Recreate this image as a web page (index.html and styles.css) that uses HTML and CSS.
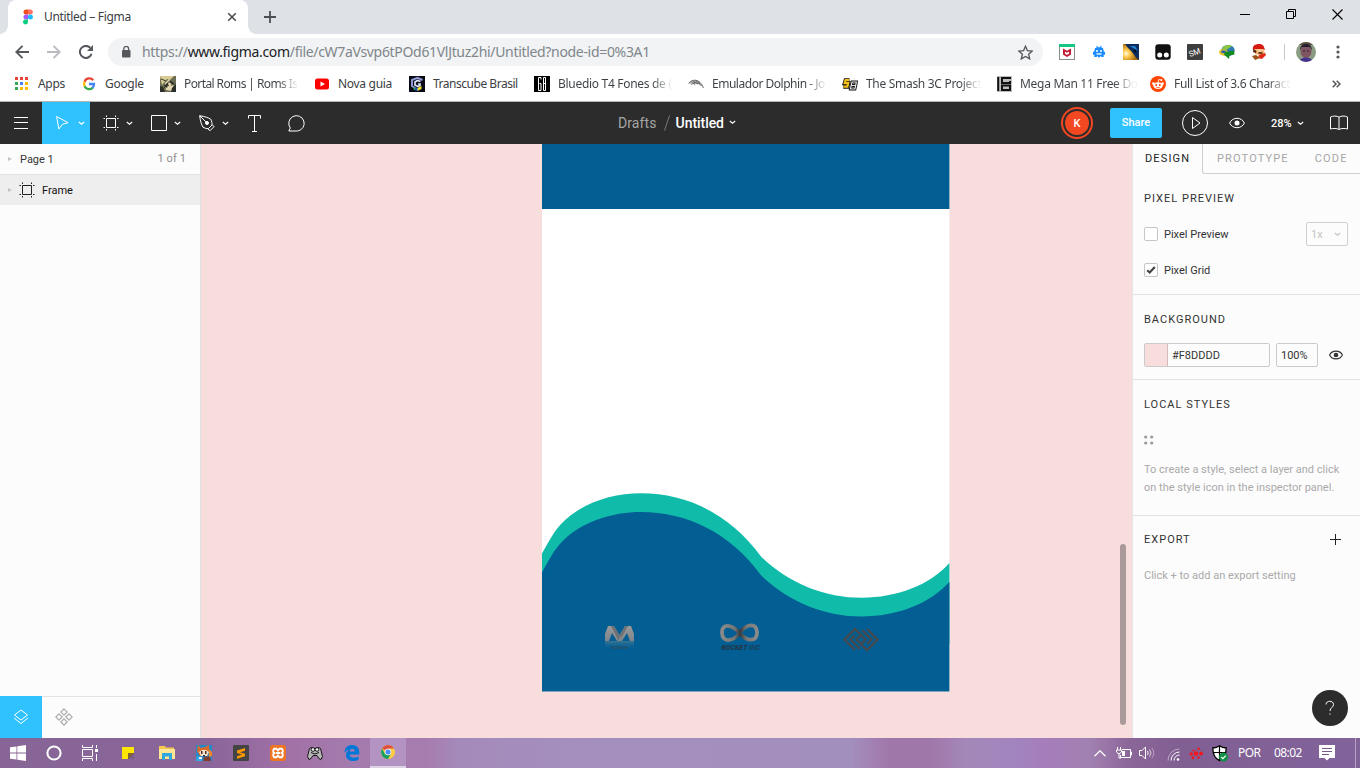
FILE: index.html
```html
<!DOCTYPE html>
<html lang="pt">
<head>
<meta charset="utf-8">
<title>Untitled – Figma</title>
<link rel="stylesheet" href="styles.css">
</head>
<body>
<header class="tabstrip">
  <div class="tab">
    <svg width="10" height="16" viewBox="0 0 10 16"><path d="M3 .5h2v5H3a2.5 2.5 0 0 1 0-5z" fill="#f24e1e"/><path d="M5 .5h2.3a2.5 2.5 0 0 1 0 5H5z" fill="#ff7262"/><path d="M3 5.500h2v5H3a2.500 2.500 0 0 1 0-5z" fill="#a259ff"/><circle cx="7.400" cy="8" r="2.500" fill="#1abcfe"/><path d="M3 10.500h2V13a2.500 2.500 0 1 1-2-2.500z" fill="#0acf83"/></svg>
    <span class="tab-title">Untitled – Figma</span>
    <svg class="tab-close" width="10" height="10" viewBox="0 0 10 10"><path d="M1.200 1.200l7.600 7.600M8.800 1.200L1.200 8.800" stroke="#4b4f54" stroke-width="1.600"/></svg>
  </div>
  <svg class="newtab" width="12" height="12" viewBox="0 0 12 12"><path d="M6 0v12M0 6h12" stroke="#4b4f54" stroke-width="1.800"/></svg>
  <div class="winctl">
    <svg width="10" height="10" viewBox="0 0 10 10"><path d="M0 5.500h10" stroke="#000"/></svg>
    <svg width="10" height="10" viewBox="0 0 10 10" fill="none" stroke="#000"><path d="M.5 2.500h7v7h-7zM2.500 2.500v-2h7v7h-2"/></svg>
    <svg width="11" height="11" viewBox="0 0 11 11"><path d="M.5.5l10 10M10.500.5l-10 10" stroke="#000" stroke-width="1.100"/></svg>
  </div>
</header>

<div class="navbar">
  <div class="navbtns">
    <svg width="14" height="14" viewBox="0 0 14 14" fill="none" stroke="#54575b" stroke-width="1.900"><path d="M14 7H1.500M7.500.8L1.300 7l6.200 6.200"/></svg>
    <svg width="14" height="14" viewBox="0 0 14 14" fill="none" stroke="#b9bbbe" stroke-width="1.900"><path d="M0 7h12.500M6.500.8L12.700 7l-6.200 6.200"/></svg>
    <svg width="14" height="14" viewBox="0 0 14 14" fill="none" stroke="#54575b" stroke-width="2"><path d="M12.600 8.800A6 6 0 1 1 11.300 2.800"/><path d="M14 0v6H8z" fill="#54575b" stroke="none"/></svg>
  </div>
  <div class="omnibox">
    <svg width="10" height="12" viewBox="0 0 10 12"><rect x="1" y="4" width="8.500" height="7.500" rx="1" fill="#54575b"/><path d="M2.800 5V2.800a2.400 2.400 0 0 1 4.800 0V5" fill="none" stroke="#54575b" stroke-width="1.300"/></svg>
    <span class="url">https://<b>www.figma.com</b>/file/cW7aVsvp6tPOd61VlJtuz2hi/Untitled?node-id=0%3A1</span>
    <svg class="star" width="15" height="15" viewBox="0 0 15 15"><path d="M7.500 1.200l1.900 4.400 4.800.4-3.600 3.200 1.100 4.700-4.200-2.500-4.200 2.500 1.100-4.700L.8 6l4.800-.4z" fill="none" stroke="#54575b" stroke-width="1.300"/></svg>
  </div>
  <div class="exts">
    <svg width="16" height="16" viewBox="0 0 16 16"><rect x=".5" y=".5" width="15" height="15" fill="#fff" stroke="#8d8d8d"/><rect width="16" height="3" fill="#16c784"/><path d="M4 4.500l4 2.300 4-2.300v6L8 13l-4-2.500zM5.900 7.600v2l2.100 1.300 2.100-1.300v-2L8 8.800z" fill="#c01833" fill-rule="evenodd"/></svg>
    <svg width="16" height="16" viewBox="0 0 16 16"><path d="M4 4l1.500-.3L5.700 1.500l1.600 1.700h1.400l1.600-1.700.2 2.200L12 4l.8 3.500L14 8v3l-1.300-.5V13h-2.200l-1-1-1 1.500h-1l-1-1.500-1 1H3.300v-2.500L2 11V8l1.200-.5z" fill="#1a8cff"/><circle cx="6" cy="7" r="1" fill="#fff"/><circle cx="10" cy="7" r="1" fill="#fff"/><path d="M5.500 9.300h5v1.300h-5z" fill="#fff"/></svg>
    <svg width="16" height="16" viewBox="0 0 16 16"><defs><radialGradient id="sun" cx=".2" cy=".6" r=".65"><stop offset="0" stop-color="#fffbe0"/><stop offset=".35" stop-color="#fcc94c"/><stop offset="1" stop-color="#a8690d"/></radialGradient></defs><rect width="16" height="16" fill="url(#sun)"/><path d="M2 0h14v16C12 14 11 9 6 5 4 3 3 1 2 0z" fill="#0b2c5c"/><path d="M7 2l8 5-3-5z" fill="#1c83d1"/><circle cx="12" cy="7" r="1.500" fill="#041021"/></svg>
    <svg width="16" height="16" viewBox="0 0 16 16"><rect x=".3" y=".3" width="15.400" height="15.400" rx="3" fill="#111"/><circle cx="4.700" cy="11" r="2.500" fill="#fff"/><circle cx="11.300" cy="11" r="2.500" fill="#fff"/></svg>
    <svg width="16" height="16" viewBox="0 0 16 16"><rect width="16" height="16" rx="1" fill="#3e3e3e"/><text x="1.500" y="11" transform="rotate(-20 8 8)" class="sm-mark">SM</text></svg>
    <svg width="16" height="16" viewBox="0 0 16 16"><ellipse cx="9" cy="6.500" rx="6.700" ry="5.500" fill="#2e78b4"/><path d="M3 4c3-4 8-3.500 10-2L9 5 5 7z" fill="#8cc63f"/><ellipse cx="4.500" cy="8.500" rx="4.500" ry="3" transform="rotate(15 4.500 8.500)" fill="#e8c52c"/><ellipse cx="4.500" cy="7.800" rx="2.500" ry="1.500" fill="#2d66aa"/><path d="M6 8l9-1.500.5 4-5 1L10 15l-5-4.500z" fill="#118b20"/></svg>
    <svg width="16" height="16" viewBox="0 0 16 16"><path d="M2 6C1 2 4 0 8 0c4 0 5 2 6 6l-3-1z" fill="#d91a10"/><path d="M3 5h9l2 4-4 3-6-2z" fill="#f4ba7b"/><path d="M2.500 5l3 2-.5 2-3-1zM8 8l4 .5-1 1.500-4-.5z" fill="#51220e"/><path d="M7 5l4 .5-1 2-4-.5z" fill="#fcd29d"/><path d="M8 11l6-2 1 2-4 4-4-1z" fill="#e02a16"/><path d="M1 12l4-1 4 3-5 2z" fill="#9c5217"/></svg>
    <i class="ext-sep"></i>
    <svg width="20" height="20" viewBox="0 0 20 20"><defs><clipPath id="av"><circle cx="10" cy="10" r="10"/></clipPath></defs><g clip-path="url(#av)"><rect width="20" height="20" fill="#8b9c84"/><path d="M0 0h20v3H0z" fill="#594d40"/><ellipse cx="10" cy="9.500" rx="5.500" ry="6.500" fill="#805562"/><path d="M4 8c0-8 12-8 12 0l-2-3H6z" fill="#241d2f"/><path d="M3 20c1-6 13-6 14 0z" fill="#46338f"/><circle cx="8" cy="9" r=".8" fill="#25172b"/><circle cx="12" cy="9" r=".8" fill="#25172b"/></g></svg>
    <svg class="kebab" width="4" height="14" viewBox="0 0 4 14" fill="#54575b"><circle cx="2" cy="2" r="1.600"/><circle cx="2" cy="7" r="1.600"/><circle cx="2" cy="12" r="1.600"/></svg>
  </div>
</div>

<nav class="bookmarks">
  <div class="bm"><svg width="16" height="16" viewBox="0 0 16 16"><path d="M1 1h3v3H1zM6 1h3v3H6zM11 1h3v3h-3z" fill="#ea4335"/><path d="M1 6h3v3H1z" fill="#34a853"/><path d="M6 6h3v3H6z" fill="#4285f4"/><path d="M11 6h3v3h-3zM6 11h3v3H6zM11 11h3v3h-3z" fill="#fbbc05"/><path d="M1 11h3v3H1z" fill="#34a853"/></svg><span>Apps</span></div>
  <div class="bm"><svg width="16" height="16" viewBox="0 0 16 16" fill="none" stroke-width="2.300"><path d="M12.200 4.200A5 5 0 0 0 3.600 5.800" stroke="#ea4335"/><path d="M3.700 5.600a5 5 0 0 0 0 4.800" stroke="#fbbc05"/><path d="M3.600 10.200a5 5 0 0 0 8.200 1.400" stroke="#34a853"/><path d="M8 8h5a5 5 0 0 1-1.400 3.700" stroke="#4285f4"/></svg><span>Google</span></div>
  <div class="bm tight"><svg width="16" height="16" viewBox="0 0 16 16"><rect width="16" height="16" fill="#6b6e52"/><path d="M0 0h14l-4 4-3-1-5 6z" fill="#d8cc94"/><path d="M5 7l4-4 5 5-2 7-6-1z" fill="#e2d4ac"/><path d="M4 10l5-5-2 7zM10 4l5 4-2 1-4-3zM0 10l3 1 2 5H0zM12 12l4-4v8h-5z" fill="#2c2f29"/><path d="M1 3l5 2M3 13l3-4M7 9l2 .5M11 9h1.500" stroke="#35362a"/></svg><span class="fade">Portal Roms | Roms Is</span></div>
  <div class="bm"><svg width="16" height="16" viewBox="0 0 16 16"><rect x="1" y="2.500" width="14" height="11" rx="2.500" fill="#f00"/><path d="M6.500 5.500v5L11 8z" fill="#fff"/></svg><span>Nova guia</span></div>
  <div class="bm snug"><svg width="16" height="16" viewBox="0 0 16 16"><rect width="16" height="16" fill="#080a15"/><path d="M13.500 4L8.500 1.800 3 4v6l4.500 3" fill="none" stroke="#8f97d4" stroke-width="2"/><path d="M11.500 5.500L8.500 4.500 6 6v3l3 1.500 2-1V8H9" fill="none" stroke="#dfe2fb" stroke-width="1.700"/><path d="M5 11.500l4 .5v3l-4-1z" fill="#1a47ce"/><path d="M8.500 12l4-2v3l-4 2z" fill="#f2e31d"/><path d="M4 11l3 2-2 1z" fill="#23b530"/></svg><span>Transcube Brasil</span></div>
  <div class="bm"><svg width="16" height="16" viewBox="0 0 16 16"><rect width="16" height="16" fill="#000"/><path d="M7 3.500v-2H4.500v13H7v-7H5.500M9.500 1.500h2v13h-2v-13M9.500 7.500h2" fill="none" stroke="#fff"/></svg><span class="fade">Bluedio T4 Fones de (</span></div>
  <div class="bm snug"><svg width="16" height="16" viewBox="0 0 16 16" fill="none"><path d="M.5 7.500C4 2.500 12 2.500 15.500 12c-3-4.500-6-5.500-9-5l1 3-3-2.500z" fill="#a4a6a4"/><path d="M.5 7.500C4 2.500 12 2.500 15.500 12M3 8.500C7 6 11 7 13.500 10M5 5.500l5 2.500M8 4.500l4 3" stroke="#565956" stroke-width=".8"/></svg><span class="fade">Emulador Dolphin - Jo</span></div>
  <div class="bm"><svg width="16" height="16" viewBox="0 0 16 16"><g fill="none"><path d="M7.500 4.200H3.600L2.700 7.200h3.500l-.8 3.500H1.200" stroke="#111" stroke-width="4"/><path d="M7.300 4.200H3.600L2.700 7.200h3.500l-.8 3.500H1.400" stroke="#f4c11b" stroke-width="2.200"/><path d="M10 6h4.300l-.6 3.500H9.200zM9.200 9.500h4.500l-.8 3.500H8.500z" stroke="#111" stroke-width="3"/><path d="M10 6h4.300l-.6 3.500H9.200zM9.200 9.500h4.500l-.8 3.500H8.500z" stroke="#e6e6e6" stroke-width="1.200"/></g></svg><span class="fade">The Smash 3C Project</span></div>
  <div class="bm"><svg width="16" height="16" viewBox="0 0 16 16"><rect x="1" width="15" height="16" fill="#bdbdbd"/><path d="M2.200 1v14M15 2H6v5h9M14 5v2h-3M15 9.500H6V14h8v-4.500" fill="none" stroke="#111" stroke-width="2"/></svg><span class="fade">Mega Man 11 Free Do</span></div>
  <div class="bm"><svg width="16" height="16" viewBox="0 0 16 16"><circle cx="8" cy="8" r="8" fill="#ff4500"/><ellipse cx="8" cy="9.600" rx="4.800" ry="3.400" fill="#fff"/><circle cx="3.400" cy="7.600" r="1.300" fill="#fff"/><circle cx="12.600" cy="7.600" r="1.300" fill="#fff"/><path d="M8 6.500l.7-3 2.300.6" fill="none" stroke="#fff" stroke-width=".8"/><circle cx="11.300" cy="4.100" r="1" fill="#fff"/><circle cx="6.200" cy="9" r="1" fill="#ff4500"/><circle cx="9.800" cy="9" r="1" fill="#ff4500"/><path d="M6 11c1 .9 3 .9 4 0" fill="none" stroke="#ff4500" stroke-width=".7"/></svg><span class="fade">Full List of 3.6 Charact</span></div>
  <svg class="more" width="9" height="8" viewBox="0 0 9 8" fill="none" stroke="#54575b" stroke-width="1.500"><path d="M.7.7L4 4 .7 7.300M4.700.7L8 4 4.700 7.300"/></svg>
</nav>

<div class="toolbar">
  <div class="tools">
    <div class="tool"><svg width="14" height="12" viewBox="0 0 14 12"><path d="M0 .5h14M0 5.500h14M0 11.500h14" stroke="#fff"/></svg></div>
    <div class="tool drop active"><svg width="16" height="18" viewBox="0 0 16 18" fill="none" stroke="#fff"><path d="M1.600 2.500l11.500 6.200-5.500 1.500-3.800 4.800z"/></svg><svg width="7" height="5" viewBox="0 0 7 5"><path class="chev" d="M.8 1l2.700 2.200L6.200 1"/></svg></div>
    <div class="tool drop"><svg width="16" height="18" viewBox="0 0 16 18" fill="none" stroke="#fff"><path d="M3.500 4.500h9v9h-9zM3.500 1.500v1.500M12.500 1.500v1.500M3.500 15v1.500M12.500 15v1.500M.5 4.500H2M.5 13.500H2M14 4.500h1.500M14 13.500h1.500"/></svg><svg width="7" height="5" viewBox="0 0 7 5"><path class="chev" d="M.8 1l2.700 2.200L6.200 1"/></svg></div>
    <div class="tool drop"><svg width="16" height="18" viewBox="0 0 16 18" fill="none" stroke="#fff"><path d="M.5 1.500h15v15H.5z"/></svg><svg width="7" height="5" viewBox="0 0 7 5"><path class="chev" d="M.8 1l2.700 2.200L6.200 1"/></svg></div>
    <div class="tool drop"><svg width="16" height="18" viewBox="0 0 16 18" fill="none" stroke="#fff"><path d="M.7 1.700c5 .8 8.800 2 11 3.500 1.200 2.400 1.500 4.200 1.300 5.800l-3.700 3.700c-2 0-3.700-.5-5.300-1.500C2.300 10.300 1.200 6.800.7 1.700zM.7 1.700l6.200 6.200M13.300 10.700l1.700 2-4 4-2-1.700"/><circle cx="8" cy="9" r="1.500" fill="#fff"/></svg><svg width="7" height="5" viewBox="0 0 7 5"><path class="chev" d="M.8 1l2.700 2.200L6.200 1"/></svg></div>
    <div class="tool type"><svg width="13" height="17" viewBox="0 0 13 17" fill="none" stroke="#fff"><path d="M.5 3.500v-3h12v3M6.500.5v16M4 16.500h5"/></svg></div>
    <div class="tool"><svg width="18" height="17" viewBox="0 0 18 17" fill="none" stroke="#fff"><path d="M.8 16l1.500-3A7.700 7.700 0 1 1 9.500 16z"/></svg></div>
  </div>
  <div class="crumb"><span class="drafts">Drafts</span><svg width="6" height="16" viewBox="0 0 6 16"><path d="M5.500.5l-5 15" stroke="#777"/></svg><span class="fname">Untitled</span><svg width="7" height="5" viewBox="0 0 7 5"><path class="chev" d="M.8 1l2.700 2.200L6.200 1"/></svg></div>
  <div class="actions">
    <div class="avatar"><span>K</span></div>
    <div class="share">Share</div>
    <svg class="play" width="26" height="26" viewBox="0 0 26 26" fill="none" stroke="#fff"><circle cx="13" cy="13" r="12.500"/><path d="M10.500 7.500v11l7.500-5.500z"/></svg>
    <svg class="eye" width="16" height="12" viewBox="0 0 16 12" fill="none" stroke="#fff"><path d="M.6 6C3.500-.3 12.500-.3 15.400 6 12.500 12.300 3.500 12.300.6 6z"/><circle cx="8" cy="6" r="2.500" fill="#fff" stroke="none"/></svg>
    <span class="zoom">28%</span>
    <svg width="7" height="5" viewBox="0 0 7 5"><path class="chev" d="M.8 1l2.700 2.200L6.200 1"/></svg>
    <svg class="book" width="18" height="16" viewBox="0 0 18 16" fill="none" stroke="#fff"><path d="M9 14.500c-2-1.300-6-1.300-8.500-.5V2C3 .7 7 .7 9 2.200 11 .7 15 .7 17.500 2v12c-2.500-.8-6.500-.8-8.500.5zM9 2v12.500"/></svg>
  </div>
</div>

<main class="work">
  <aside class="layers">
    <div class="pagerow"><i class="tri"></i><span>Page 1</span><em>1 of 1</em></div>
    <div class="layer"><i class="tri"></i><svg width="16" height="16" viewBox="0 0 16 16" fill="none" stroke="#222"><path d="M3.500 3.500h9v9h-9zM3.500.5V2M12.500.5V2M3.500 14v1.500M12.500 14v1.500M.5 3.500H2M.5 12.500H2M14 3.500h1.500M14 12.500h1.500"/></svg><span>Frame</span></div>
    <div class="ltabs">
      <div class="ltab on"><svg width="16" height="16" viewBox="0 0 16 16" fill="none" stroke="#fff"><path d="M8 1l6.500 5L8 11 1.500 6zM1 9l7 5.500L15 9"/></svg></div>
      <div class="ltab"><svg width="18" height="18" viewBox="0 0 18 18" fill="none" stroke="#aaa" stroke-width="1.100"><path d="M9 .8L12.200 4 9 7.200 5.800 4zM9 10.800l3.200 3.200L9 17.200 5.800 14zM4 5.800L7.200 9 4 12.200.8 9zM14 5.800L17.200 9 14 12.200 10.800 9z"/></svg></div>
    </div>
  </aside>

  <section class="canvas">
    <svg class="frame" width="408" height="548" viewBox="0 0 408 548">
      <defs>
        <linearGradient id="metal" x1="0" y1="0" x2="0" y2="1"><stop offset="0" stop-color="#9a9a9a"/><stop offset="1" stop-color="#7d858a"/></linearGradient>
        <linearGradient id="loop" x1="0" x2="1"><stop offset="0" stop-color="#8a8a8a"/><stop offset=".35" stop-color="#777"/><stop offset=".52" stop-color="#363b40"/><stop offset=".7" stop-color="#777"/><stop offset="1" stop-color="#8a8a8a"/></linearGradient>
        <linearGradient id="refl" x1="0" y1="0" x2="0" y2="1"><stop offset="0" stop-color="#6a8795" stop-opacity=".55"/><stop offset="1" stop-color="#035e93" stop-opacity="0"/></linearGradient>
      </defs>
      <rect width="407.400" height="547.500" fill="#fff"/>
      <rect width="407.400" height="65" fill="#035e93"/>
      <path d="M0 409.500C7 397 12 387.500 19 380C39 359 70 349.300 99 349.300C145 349.300 188 370 219 412.500C248 440 283 453.700 319.500 453.700C355 453.700 388 441 407.400 419V500H0z" fill="#10bca9"/>
      <path d="M0 428.200C7 415.700 12 406.200 19 398.700C39 377.700 70 368 99 368C145 368 188 388.700 219 431.200C248 458.700 283 472.400 319.500 472.400C355 472.400 388 459.700 407.400 437.700V547.500H0z" fill="#035e93"/>
      <path d="M63 497v-7l3-8h6l5.500 9 5.500-9h6l3 8v7h-4l-3-8-5 8h-5l-5-8-3 8z" fill="url(#metal)"/>
      <path d="M69 482h3l6 10-1.500 4zM86 482h-3l-5 9 1 3z" fill="#555b60" opacity=".6"/>
      <rect x="63" y="497" width="29" height="9" fill="url(#refl)"/>
      <text x="69" y="505" class="logo-a">MONOGR</text>
      <path d="M197.500 489C190 480 180 479 180 488.500C180 499 191 498 197.500 489C204 480 215 478 215 488.500C215 498 205 498 197.500 489z" fill="none" stroke="url(#loop)" stroke-width="3.800"/>
      <text x="179.500" y="506" class="logo-b"><tspan font-weight="bold">ROCKET</tspan> INC</text>
      <g fill="none" stroke="#45494d" stroke-width="2.300"><path d="M313 506L302.500 495.500 313 485l10.500 10.500L319 500M313 491l-4.500 4.500 9.500 9.500"/><path d="M325 485l10.500 10.500L325 506l-10.500-10.500L319 491M325 500l4.500-4.500-9.500-9.500"/></g>
    </svg>
    <i class="scroll"></i>
  </section>

  <aside class="props">
    <div class="ptabs"><div class="ptab on">DESIGN</div><div class="prest"><span>PROTOTYPE</span><span>CODE</span></div></div>
    <div class="sec">
      <h2>PIXEL PREVIEW</h2>
      <div class="row"><i class="check"></i><span>Pixel Preview</span><div class="select"><span>1x</span><svg width="7" height="5" viewBox="0 0 7 5"><path class="chev grey" d="M.8 1l2.700 2.200L6.200 1"/></svg></div></div>
      <div class="row"><i class="check"><svg width="12" height="12" viewBox="0 0 12 12"><path d="M2.200 6.200l2.500 2.300L9.800 3" fill="none" stroke="#444" stroke-width="2.200"/></svg></i><span>Pixel Grid</span></div>
    </div>
    <div class="sec">
      <h2>BACKGROUND</h2>
      <div class="row"><div class="color"><i></i><span>#F8DDDD</span></div><div class="opac">100%</div><svg width="14" height="10" viewBox="0 0 14 10" fill="none" stroke="#333" stroke-width="1.100"><path d="M.6 5C3-.2 11-.2 13.400 5 11 10.200 3 10.200.6 5z"/><circle cx="7" cy="5" r="2.300" fill="#333" stroke="none"/></svg></div>
    </div>
    <div class="sec local">
      <h2>LOCAL STYLES</h2>
      <div class="row"><svg width="10" height="10" viewBox="0 0 10 10" fill="#999"><circle cx="1.700" cy="2" r="1.600"/><circle cx="7.700" cy="2" r="1.600"/><circle cx="1.700" cy="8" r="1.600"/><circle cx="7.700" cy="8" r="1.600"/></svg></div>
      <p>To create a style, select a layer and click<br>on the style icon in the inspector panel.</p>
    </div>
    <div class="sec export">
      <div class="row"><h2>EXPORT</h2><svg width="11" height="11" viewBox="0 0 11 11"><path d="M5.500 0v11M0 5.500h11" stroke="#222"/></svg></div>
      <div class="row hint">Click + to add an export setting</div>
    </div>
    <div class="help"><svg width="10" height="16" viewBox="0 0 10 16" fill="none" stroke="#fff"><path d="M1 4.500C1 .2 8.500.2 8.500 4.500c0 3-3.500 3-3.500 6.500M5 13.500v1.200"/></svg></div>
  </aside>
</main>

<footer class="taskbar">
  <div class="apps">
    <div><svg width="16" height="16" viewBox="0 0 16 16" fill="#fff"><path d="M0 2.300l6.500-.9v6.100H0zM7.300 1.200L16 0v7.500H7.300zM0 8.400h6.500v6.200L0 13.700zM7.300 8.400H16V16l-8.700-1.200z"/></svg></div>
    <div><svg width="16" height="16" viewBox="0 0 16 16"><circle cx="8" cy="8" r="6.600" fill="none" stroke="#fff" stroke-width="2"/></svg></div>
    <div><svg width="16" height="16" viewBox="0 0 16 16" fill="none" stroke="#fff"><path d="M.5 0v2.500h10V0M.5 16v-2.500h10V16M.5 4.500h10v7H.5zM14.500 0v3M14.500 9v7"/><path d="M13 4h3v3h-3z" fill="#fff" stroke="none"/></svg></div>
    <div><svg width="16" height="16" viewBox="0 0 16 16"><path d="M2 2h12v6l-6 6H2z" fill="#ffe600"/><path d="M8 8h6v6H8z" fill="#7c5d85"/><path d="M8 8h6l-6 6z" fill="#7f652f"/></svg></div>
    <div><svg width="16" height="16" viewBox="0 0 16 16"><path d="M0 1h6l1 1.500h8V14H0z" fill="#f3c74f"/><path d="M0 4h16v10H0z" fill="#ffe694"/><path d="M3 15V8h10v7h-3v-3.500H6V15z" fill="#30a7df"/></svg></div>
    <div><svg width="16" height="16" viewBox="0 0 16 16"><rect width="16" height="16" fill="#278ac8"/><path d="M2 0l3 3 4-1 4-2v6l-2 5H4L1 6z" fill="#d86a2a"/><path d="M3 7l3-2h4l3 2-2 4H5z" fill="#fbe3c5"/><path d="M5 6h1.500v3H5zM9 6h1.500v3H9zM7 10h2v1.500H7z" fill="#402c36"/><path d="M1 11l5 1v4H0z" fill="#35a9e5"/><path d="M3 12h3v2H3z" fill="#eee"/><path d="M8 12l6-1 1 5H7z" fill="#813d2f"/><path d="M13 4l3 3v4l-3 1z" fill="#f18626"/></svg></div>
    <div><svg width="16" height="16" viewBox="0 0 16 16"><rect width="16" height="16" rx="1" fill="#444"/><path d="M12 3v2.700L7 7.200l5 1.500v2.600l-8 2.500v-2.600l5-1.600L4 8V5.500z" fill="#ff9800"/></svg></div>
    <div><svg width="16" height="16" viewBox="0 0 16 16"><rect width="16" height="16" rx="2.500" fill="#ee7623"/><path d="M8 5.500L6.500 3.700H4.200L3.300 5v2l1.200 1-1.200 1v2l.9 1.300h2.300L8 10.500l1.500 1.800h2.300l.9-1.300V9l-1.200-1 1.200-1V5l-.9-1.300H9.500zM6 8h4" fill="none" stroke="#fff" stroke-width="1.900"/></svg></div>
    <div><svg width="16" height="16" viewBox="0 0 16 16"><path d="M4 2.500l2 1h4l2-1 1.500 1 2 8-1.500 3-2-1-2-3H6l-2 3-2 1-1.500-3 2-8z" fill="#b7b7b7" stroke="#171717"/><circle cx="6" cy="4.500" r="1.800" fill="#fff" stroke="#111"/><circle cx="10" cy="4.500" r="1.800" fill="#fff" stroke="#111"/><path d="M4 7.500q4 3 8 0" stroke="#111" fill="none"/></svg></div>
    <div><svg width="16" height="16" viewBox="0 0 16 16"><path d="M.5 8C.5 2.500 4 0 8.200 0 13 0 15.300 3.500 15.300 7.500v2H5.500c.2 2 2 3.200 4.500 3.200 1.700 0 3.200-.5 4.500-1.200v3c-1.500 1-3.300 1.500-5.500 1.500-4.300 0-7-2.500-7-6 0-2.300 1.300-4 3.300-5C3 5.300 1.500 6.300.5 8zM5.700 6.500h5c0-1.800-.8-2.800-2.400-2.800-1.500 0-2.400 1.200-2.600 2.800z" fill="#0078d7" fill-rule="evenodd"/></svg></div>
    <div class="running"><svg width="14" height="14" viewBox="0 0 14 14"><circle cx="7" cy="7" r="7" fill="#ffcd40"/><path d="M7 7L1 3.500A7 7 0 0 1 13 3.500H7z" fill="#de5145"/><path d="M1 3.500A7 7 0 0 0 7 14l3-5.300L7 10 4 8.700z" fill="#1aa15f"/><circle cx="7" cy="7" r="3.300" fill="#f4f4f4"/><circle cx="7" cy="7" r="2.500" fill="#4c8bf5"/></svg></div>
  </div>
  <div class="tray">
    <svg width="12" height="7" viewBox="0 0 12 7"><path d="M.5 6.200L6 .8l5.500 5.400" fill="none" stroke="#fff" stroke-width="1.200"/></svg>
    <svg width="16" height="12" viewBox="0 0 16 12"><path d="M6 2.500h8.500v8H4.500V8M14.500 5h1v3h-1" fill="none" stroke="#fff"/><path d="M6 4h3v5H6z" fill="#fff"/><path d="M1.500 0v3M4.500 0v3M.5 3h5v2L3 7 .5 5zM3 6v5h2" fill="none" stroke="#fff"/></svg>
    <svg width="16" height="14" viewBox="0 0 16 14" fill="none" stroke="#fff"><path d="M.5 4.500h2.500L6.500 1v12L3 9.500H.5zM8.500 5q1.300 2 0 4"/><path d="M10.500 3.500q3 3.500 0 7" opacity=".7"/><path d="M12.800 2q4 5 0 10" opacity=".4"/></svg>
    <svg width="13" height="13" viewBox="0 0 13 13" fill="none" stroke="#fff"><path d="M1 12.500A11.500 11.500 0 0 1 12.500 1" opacity=".45"/><path d="M4 12.500A8.500 8.500 0 0 1 12.500 4"/><path d="M7 12.500A5.500 5.500 0 0 1 12.500 7"/><circle cx="11" cy="11.500" r="1.300" fill="#fff" stroke="none"/></svg>
    <svg width="14" height="13" viewBox="0 0 14 13" fill="#f2181d"><circle cx="7" cy="6.500" r="2.300"/><circle cx="2.200" cy="7" r="1.700"/><circle cx="12" cy="6.500" r="1.900"/><circle cx="9.500" cy="1.800" r="1.300"/><circle cx="4.500" cy="3.500" r="1"/><circle cx="4" cy="10.700" r="1.500"/><circle cx="9.500" cy="10.500" r="1.300"/></svg>
    <svg width="16" height="17" viewBox="0 0 16 17"><path d="M7.500.8C5.500 2.300 3 3 .8 3c0 6 1.200 10 6.700 12.700C13 13 14.200 9 14.200 3c-2.200 0-4.700-.7-6.700-2.200z" fill="#fff" stroke="#000" stroke-width="1.300"/><path d="M7.500 1v14.500M1 7.500h13" stroke="#000" stroke-width="1.200"/><circle cx="11.500" cy="12" r="4.500" fill="#109044"/><path d="M9.300 12l1.600 1.600 2.900-3" fill="none" stroke="#fff" stroke-width="1.200"/></svg>
    <span class="por">POR</span><span class="clock">08:02</span>
    <svg width="16" height="16" viewBox="0 0 16 16"><path d="M0 0h16v13h-5.500L8 15.500 5.500 13H0z" fill="#fff"/><path d="M3 3.500h10M3 6.500h10M3 9.500h7" stroke="#755a86"/></svg>
    <i></i>
  </div>
</footer>
</body>
</html>
```
FILE: styles.css
```css
* { box-sizing: border-box; }
body { margin: 0; width: 1360px; height: 768px; overflow: hidden; font-family: Roboto, sans-serif; font-size: 11px; color: #333; background: #fff; }
svg { display: block; flex: none; }
i, em { font-style: normal; }

/* Browser chrome */
.tabstrip { height: 34px; background: #dee1e6; display: flex; align-items: center; padding-left: 8px; }
.tab { position: relative; width: 240px; height: 34px; background: #fff; border-radius: 8px 8px 0 0; display: flex; align-items: center; padding: 0 11px 0 15px; }
.tab::before, .tab::after { content: ""; position: absolute; bottom: 0; width: 8px; height: 8px; }
.tab::before { left: -8px; background: radial-gradient(circle at 0 0, #dee1e6 7.500px, #fff 8px); }
.tab::after { right: -8px; background: radial-gradient(circle at 100% 0, #dee1e6 7.500px, #fff 8px); }
.tab-title { margin-left: 11px; padding-bottom: 1px; font: 12px "Noto Sans", sans-serif; letter-spacing: -.33px; color: #3c4043; white-space: nowrap; }
.tab-close { margin-left: auto; }
.newtab { margin-left: 16px; }
.winctl { margin-left: auto; display: flex; align-items: center; gap: 36px; padding: 0 17px 6px 0; }
.navbar { height: 36px; display: flex; align-items: center; padding-left: 15px; }
.navbtns { display: flex; gap: 18px; width: 93px; }
.omnibox { width: 935px; height: 28px; border-radius: 14px; background: #f1f3f4; display: flex; align-items: center; padding: 0 10px 0 13px; }
.url { margin-left: 11px; padding-bottom: 2px; font: 14px "Noto Sans", sans-serif; letter-spacing: -.32px; color: #80868b; white-space: nowrap; }
.url b { font-weight: 400; color: #202124; }
.star { margin-left: auto; }
.exts { display: flex; align-items: center; gap: 16px; margin-left: 16px; }
.ext-sep { width: 1px; height: 16px; background: #c6c8cb; margin-right: -5px; margin-left: 1px; }
.kebab { margin-left: 4px; }
.sm-mark { font: 8px Roboto, sans-serif; fill: #fff; }
.bookmarks { height: 31px; display: grid; grid-template-columns: 67px 79px 154px 95px 125px 154px 154px 154px 154px 182px auto; align-items: center; padding: 0 0 3px 14px; }
.bm { display: flex; gap: 8px; align-items: center; font: 12px "Noto Sans", sans-serif; letter-spacing: -.3px; color: #3c4043; white-space: nowrap; }
.bm span { padding-bottom: 1px; }
.tight { letter-spacing: -.6px; }
.snug { letter-spacing: -.48px; }
.fade { color: transparent; background: linear-gradient(90deg, #3c4043 94px, rgba(60, 64, 67, .08) 113px); -webkit-background-clip: text; background-clip: text; }

/* Editor toolbar */
.toolbar { height: 43px; border-top: 1px solid #b4b4b4; background: #2c2c2c; display: grid; grid-template-columns: 617px 444px 299px; align-items: center; color: #fff; }
.tools, .tool, .crumb, .actions { display: flex; align-items: center; }
.tool { width: 42px; height: 42px; justify-content: center; }
.drop { width: 48px; justify-content: flex-start; padding-left: 13px; gap: 7px; }
.type { padding-right: 1px; }
.active { background: #30c2ff; }
.chev { fill: none; stroke: #fff; stroke-width: 1.100; }
.chev.grey { stroke: #c4c4c4; }
.crumb { font-size: 14px; gap: 7px; padding: 0 0 1px 1px; }
.drafts { color: #a5a5a5; letter-spacing: .1px; }
.fname { font-weight: 500; margin: 0 -2px 0 -1px; letter-spacing: -.05px; }
.avatar { width: 32px; height: 32px; border: 2px solid #f24822; border-radius: 50%; padding: 2px; }
.avatar span { display: grid; place-items: center; height: 24px; border-radius: 50%; background: #f24822; font-weight: 500; }
.share { width: 52px; height: 30px; margin-left: 17px; border-radius: 2px; background: #30c2ff; display: grid; place-items: center; font-weight: 500; padding-bottom: 2px; }
.play { margin-left: 20px; }
.eye { margin: 0 26px 0 21px; }
.zoom { font-weight: 500; margin-right: 5px; width: 21px; }
.book { margin-left: 26px; }

/* Workspace */
.work { height: 594px; display: flex; }
.layers { width: 201px; background: #fcfcfc; border-right: 1px solid #dfe0e3; display: flex; flex-direction: column; }
.tri { border: 2.500px solid transparent; border-left: 4px solid #c3c3c3; border-right: 0; margin-left: 8px; }
.pagerow, .layer { height: 31px; display: flex; align-items: center; }
.pagerow { border-bottom: 1px solid #e3e3e3; }
.pagerow span { margin-left: 8px; }
.pagerow em { margin: 0 14px 2px auto; color: #8c8c8c; letter-spacing: .1px; }
.layer { background: #eee; color: #111; height: 30px; }
.layer svg { margin: 0 7px; }
.ltabs { margin-top: auto; height: 42px; display: flex; box-shadow: inset 0 1px #e3e3e3; }
.ltab { width: 43px; height: 42px; display: grid; place-items: center; }
.ltab.on { width: 42px; background: #30c2ff; }
.canvas { position: relative; width: 931px; background: #f8dddd; overflow: hidden; }
.frame { margin-left: 341px; }
.logo-a { font: bold 4px Roboto, sans-serif; fill: #284e66; }
.logo-b { font: italic 7px Roboto, sans-serif; fill: #25333f; }
.scroll { position: absolute; right: 6px; top: 400px; width: 6px; height: 181px; border-radius: 3px; background: #aa9999; }
.props { position: relative; width: 228px; background: #fcfcfc; border-left: 1px solid #e5e5e5; }
.ptabs { height: 30px; display: flex; letter-spacing: 1.150px; }
.ptab { width: 69px; padding: 8px 0 0 12px; color: #222; }
.prest { flex: 1; border: solid #d0d0d0; border-width: 0 0 1px 1px; border-radius: 0 0 0 3px; display: flex; gap: 26px; padding: 8px 0 0 14px; color: #a6a6a6; }
.sec { padding: 6px 12px 6px 11px; border-bottom: 1px solid #e3e3e3; }
.sec h2 { margin: 0; height: 36px; line-height: 38px; font-size: 11px; font-weight: 400; letter-spacing: 1.020px; color: #333; }
.row { height: 36px; display: flex; align-items: center; }
.check { width: 14px; height: 14px; border: 1px solid #c6c6c6; border-radius: 2px; background: #fff; margin-right: 6px; }
.select { margin-left: auto; width: 42px; height: 24px; border: 1px solid #d0d0d0; border-radius: 2px; display: flex; align-items: center; justify-content: space-between; padding: 0 6px 0 4px; color: #c4c4c4; }
.color { width: 126px; height: 24px; border: 1px solid #cbcbcb; border-radius: 2px; display: flex; align-items: center; margin-right: 6px; }
.color i { width: 23px; height: 22px; background: #f8dddd; border-right: 1px solid #d4bcbc; margin-right: 4px; }
.opac { width: 42px; height: 24px; line-height: 24px; padding-left: 4px; border: 1px solid #cbcbcb; border-radius: 2px; margin-right: 11px; }
.local p { margin: 3px 0 0; height: 48px; line-height: 18px; color: #aaa; white-space: nowrap; }
.export { padding-top: 5px; border: 0; }
.export .row { justify-content: space-between; padding-right: 7px; }
.hint { color: #aaa; }
.help { position: absolute; right: 12px; bottom: 12px; width: 36px; height: 36px; border-radius: 50%; background: #2c2c2c; display: grid; place-items: center; }

/* Taskbar */
.taskbar { height: 30px; display: flex; justify-content: space-between; background: linear-gradient(90deg, #876596 0, #89669a 210px, #a271a6 290px, #a47bae 350px, #a77cae 425px, #a48aba 460px, #a48fbe 570px, #a38fbe 850px, #a077a9 890px, #a077a9 930px, #a388b8 965px, #a284bf 1015px, #a57dba 1045px, #a181b1 1090px, #8b6698 1130px, #815f93 1180px, #81639a 1360px); color: #fff; }
.apps { display: flex; }
.apps div { width: 37px; height: 30px; display: grid; place-items: center; }
.apps div:nth-child(-n+3), .apps .running { width: 36px; }
.apps div:nth-child(4) { width: 40px; }
.apps .running { background: #b393c2; border-bottom: 2px solid #ddd2e4; }
.tray { display: flex; align-items: center; width: 266px; }
.tray svg:nth-child(2) { margin: 0 7px 0 10px; }
.tray svg:nth-child(4) { margin: 2px 9px 0 12px; }
.tray svg:nth-child(6) { margin-left: 9px; }
.por, .clock { font: 12px "Noto Sans", sans-serif; letter-spacing: -.6px; width: 36px; margin-left: 10px; padding-bottom: 1px; }
.clock { width: 45px; margin-left: 0; }
.tray i { width: 1px; height: 30px; background: #b7a2c5; margin-left: 20px; }
```
